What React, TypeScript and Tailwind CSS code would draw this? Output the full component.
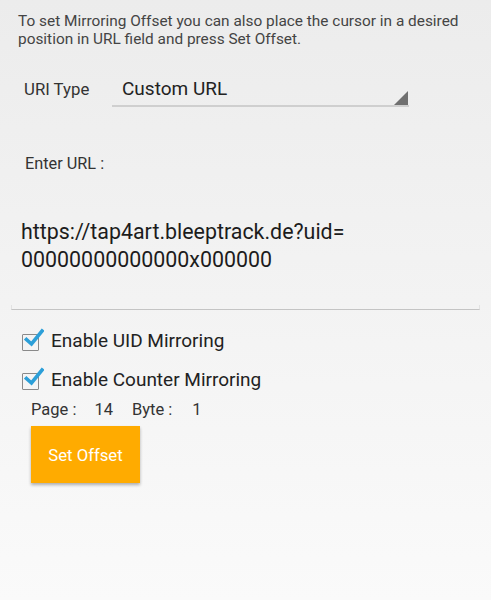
import React from "react";

function CheckBox() {
  return (
    <div className="relative w-[19px] h-[19px] shrink-0">
      <div className="absolute left-0 top-[2px] w-[17px] h-[17px] border-[1.5px] border-[#8a8a8a] rounded-[1px]" />
      <svg className="absolute left-[2px] top-[-4px]" width="20" height="20" viewBox="0 0 20 20">
        <path d="M2.5 11.5 L7.5 16 L18 3" fill="none" stroke="#2c9fd8" strokeWidth="3.6" strokeLinecap="square" />
      </svg>
    </div>
  );
}

export default function App() {
  return (
    <div
      className="w-[491px] h-[600px] overflow-hidden bg-gradient-to-b from-[#ececec] to-[#fafafa] text-[#222] flex flex-col"
      style={{ fontFamily: "Roboto, 'Noto Sans', sans-serif" }}
    >
      <p className="pl-[18px] pr-2 pt-[12px] text-[15.4px] leading-[18px] text-[#444]">
        To set Mirroring Offset you can also place the cursor in a desired position in URL field and press Set Offset.
      </p>

      <div className="flex items-end mt-[23px] h-[36px]">
        <div className="pl-[24px] w-[112px] text-[16.8px] text-[#333] pb-[5px]">URI Type</div>
        <div className="relative w-[297px] h-full border-b-2 border-[#cfcfcf]">
          <span className="absolute left-[10px] top-[4px] text-[19px] text-[#222]">Custom URL</span>
          <svg className="absolute right-[1px] bottom-0" width="14" height="14" viewBox="0 0 14 14">
            <polygon points="14,0 14,14 0,14" fill="#707070" />
          </svg>
        </div>
      </div>

      <div className="pl-[25px] mt-[47px] text-[16.3px] text-[#333] leading-[20px]">Enter URL :</div>

      <div className="mt-[44px] pl-[21px] text-[21.4px] leading-[28px] text-[#1c1c1c]">
        <div>https://tap4art.bleeptrack.de?uid=</div>
        <div>00000000000000x000000</div>
      </div>

      <div className="mx-[11px] mt-[31px] h-[5px] border-b-[1.5px] border-x border-[#c4c4c4] border-x-[#e2e2e2]" />

      <div className="flex items-center gap-[10px] pl-[22px] mt-[21px] h-[20px]">
        <CheckBox />
        <span className="text-[19px] text-[#222]">Enable UID Mirroring</span>
      </div>
      <div className="flex items-center gap-[10px] pl-[22px] mt-[19px] h-[20px]">
        <CheckBox />
        <span className="text-[19px] text-[#222]">Enable Counter Mirroring</span>
      </div>

      <div className="flex pl-[31px] mt-[10px] text-[16.5px] text-[#333] leading-[20px]">
        <span>Page :</span>
        <span className="ml-[18px]">14</span>
        <span className="ml-[19px]">Byte :</span>
        <span className="ml-[20px]">1</span>
      </div>

      <div className="pl-[31px] mt-[6px]">
        <button className="w-[109px] h-[57px] pt-[3px] bg-[#ffab00] text-white text-[16.7px] shadow-[0_2px_3px_rgba(0,0,0,0.3)]">
          Set Offset
        </button>
      </div>
    </div>
  );
}
